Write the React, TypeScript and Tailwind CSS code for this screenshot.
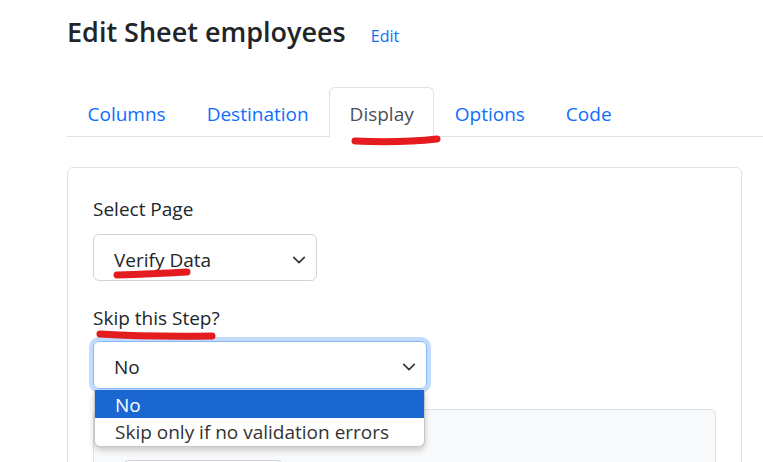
import { useState } from "react";

const tabs = ["Columns", "Destination", "Display", "Options", "Code"];

const Chevron = () => (
  <svg width="14" height="14" viewBox="0 0 16 16" fill="none">
    <path d="m2 5 6 6 6-6" stroke="#343a40" strokeWidth="2" strokeLinecap="round" strokeLinejoin="round" />
  </svg>
);

const App = () => {
  const [active] = useState<string>("Display");

  return (
    <div
      className="relative h-[462px] w-[763px] overflow-hidden bg-white text-[19px] text-[#212529]"
      style={{ fontFamily: '"Open Sans", "Noto Sans", sans-serif' }}
    >
      <div className="pl-[67px] pr-[21px]">
        {/* header */}
        <div className="flex items-baseline pt-[13px]">
          <h3 className="text-[27px] font-semibold leading-[38px]">Edit Sheet employees</h3>
          <a className="ml-[25px] pt-[1px] text-[16px] text-[#0d6efd]">Edit</a>
        </div>

        {/* tabs */}
        <ul className="mr-[-21px] mt-[36px] flex border-b border-[#dee2e6]">
          {tabs.map((tab) => (
            <li key={tab} className="-mb-px">
              <a
                className={
                  tab === active
                    ? "block h-[50px] rounded-t-[6px] border border-[#dee2e6] border-b-white bg-white px-[19.5px] pt-[4px] leading-[44px] text-[#495057]"
                    : "block h-[50px] border border-transparent px-[19.5px] pt-[4px] leading-[44px] text-[#0d6efd]"
                }
              >
                {tab}
              </a>
            </li>
          ))}
        </ul>

        {/* card */}
        <div className="mt-[30px] h-[320px] rounded-[6px] border border-[#dee2e6] px-[25px] pt-[27px]">
          <label className="block leading-[28px]">Select Page</label>
          <div className="mt-[11px] flex h-[47px] w-[224px] items-center justify-between rounded-[6px] border border-[#ced4da] pl-[20px] pr-[10px] pt-[5px]">
            <span>Verify Data</span>
            <Chevron />
          </div>

          <label className="mt-[23px] block leading-[28px]">Skip this Step?</label>
          <div className="relative mt-[9px] w-[334px]">
            <div className="flex h-[48px] items-center justify-between rounded-[6px] border border-[#86b7fe] pl-[20px] pr-[10px] pt-[4px] shadow-[0_0_0_4px_rgba(13,110,253,0.25)]">
              <span>No</span>
              <Chevron />
            </div>
            {/* open dropdown list */}
            <div className="absolute left-px top-[49px] z-10 w-[331px] overflow-hidden rounded-b-[6px] border border-t-0 border-[#c6c6c6] bg-white shadow-[0_3px_6px_rgba(0,0,0,0.2)]">
              <div className="h-[28px] bg-[#1a67d2] pl-[20px] leading-[30px] text-white">No</div>
              <div className="h-[28px] pl-[20px] leading-[28px] text-[#333]">Skip only if no validation errors</div>
            </div>
          </div>

          {/* section behind the dropdown */}
          <div className="mt-[20px] h-[80px] w-[623px] rounded-[6px] border border-[#dee2e6] bg-[#f8f9fa] pl-[29px] pt-[50px]">
            <div className="h-[40px] w-[160px] rounded-[6px] border border-[#ced4da] bg-white" />
          </div>
        </div>
      </div>

      {/* hand-drawn red marks */}
      <svg className="pointer-events-none absolute left-0 top-0" width="763" height="462">
        <g fill="none" stroke="#e41c1f" strokeWidth="7" strokeLinecap="round">
          <path d="M355 141 Q 400 143 437 139" />
          <path d="M117 275 Q 150 274 187 272" />
          <path d="M100 334 Q 150 337 212 336" />
        </g>
      </svg>
    </div>
  );
};

export default App;
